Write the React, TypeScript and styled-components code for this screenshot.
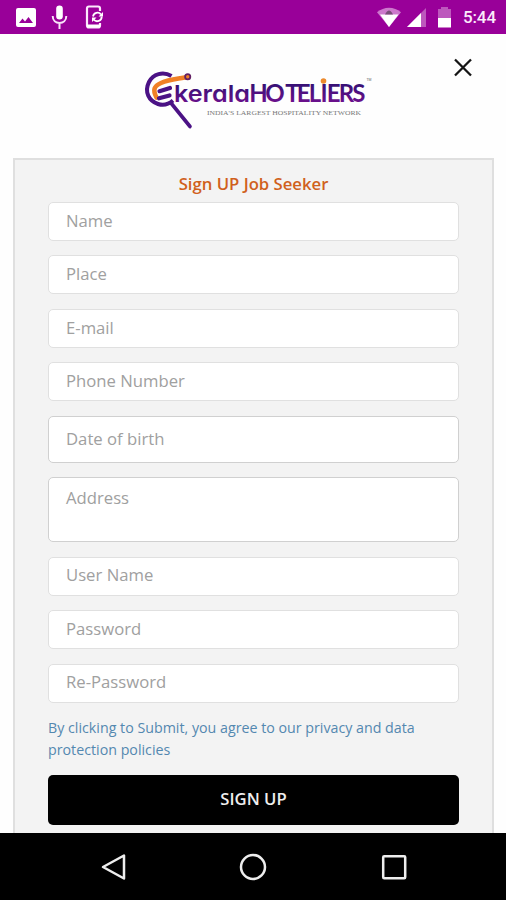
import React from "react";
import styled, { createGlobalStyle } from "styled-components";

const GlobalStyle = createGlobalStyle`
  * { box-sizing: border-box; }
  body { margin: 0; background: #fff; font-family: "Open Sans", sans-serif; }
`;

const Screen = styled.div`
  width: 506px;
  height: 900px;
  display: flex;
  flex-direction: column;
  overflow: hidden;
  background: #fefefe;
`;

const StatusBar = styled.header`
  flex: none;
  height: 34px;
  padding: 0 10px 0 16px;
  display: flex;
  align-items: center;
  justify-content: space-between;
  background: #990099;
`;

const StatusGroup = styled.div<{ $gap: number }>`
  display: flex;
  align-items: center;
  gap: ${(p) => p.$gap}px;
`;

const Clock = styled.span`
  color: #fbeafb;
  font: 500 17px/34px Roboto, sans-serif;
  letter-spacing: -0.1px;
`;

const Brand = styled.div`
  flex: none;
  height: 124px;
  padding: 24px 33px 0 136px;
  display: flex;
  align-items: flex-start;
  justify-content: space-between;
`;

const LogoSvg = styled.svg`
  display: block;
  margin-top: 2px;
`;

const LogoLower = styled.text`
  font: 600 23px Inter, sans-serif;
  font-feature-settings: "cv11";
`;

const LogoUpper = styled.text`
  font: 700 24px Lato, sans-serif;
`;

const CloseButton = styled.button`
  width: 20px;
  height: 20px;
  padding: 0;
  border: 0;
  background: none;
`;

const Card = styled.form`
  flex: none;
  height: 675px;
  margin: 0 12px 0 13px;
  padding: 11px 33px 0;
  border: 2px solid #dfdfdf;
  border-bottom: 0;
  background: #f3f3f3;
`;

const Title = styled.h1`
  margin: 0 0 6px;
  color: #d0601c;
  font-size: 16.7px;
  line-height: 25px;
  font-weight: 600;
  text-align: center;
`;

const Fields = styled.div`
  display: flex;
  flex-direction: column;
  gap: 14.45px;
`;

const fieldLook = (border: string, height: number) => `
  display: block;
  width: 411px;
  height: ${height}px;
  border: 1.5px solid ${border};
  border-radius: 5px;
  background: #fff;
  color: #555;
  font: 400 16.7px/22px "Open Sans", sans-serif;
  outline: none;
  resize: none;
  &::placeholder { color: #a0a0a0; opacity: 1; }
`;

const Input = styled.input<{ $tall?: boolean }>`
  ${(p) => fieldLook(p.$tall ? "#d0d0d0" : "#e0e0e0", p.$tall ? 47 : 39)}
  padding: 0 17px ${(p) => (p.$tall ? 1 : 2.5)}px;
`;

const TextArea = styled.textarea`
  ${fieldLook("#d0d0d0", 65)}
  padding: 9px 17px 8px;
`;

const Terms = styled.a`
  display: block;
  margin-top: 14.2px;
  color: #5388b0;
  font-size: 14.24px;
  line-height: 22px;
  text-decoration: none;
`;

const Submit = styled.button`
  display: block;
  width: 411px;
  height: 50px;
  margin-top: 14px;
  padding: 0 0 3px;
  border: 0;
  border-radius: 5px;
  background: #000;
  color: #eee;
  font: 600 16.7px "Open Sans", sans-serif;
`;

const NavBar = styled.nav`
  flex: none;
  height: 67px;
  padding: 0 98px 0 100px;
  display: flex;
  align-items: center;
  justify-content: space-between;
  background: #000;
`;

function Logo() {
  return (
    <LogoSvg width="240" height="75" viewBox="136 60 240 75" aria-label="ekeralaHoteliers">
      <defs>
        <linearGradient id="ink" x1="0" y1="0" x2="0" y2="1">
          <stop offset="0" stopColor="#24106d" />
          <stop offset="1" stopColor="#7a1093" />
        </linearGradient>
      </defs>
      <path d="M171.5 76 C163 71 153 74 149 82 C144 92 149 101 158 104 C164 106 169 104 173 100.5" fill="none" stroke="#4b1285" strokeWidth="4" />
      <path d="M171 103 L190 126.5" stroke="#4b1285" strokeWidth="3.6" strokeLinecap="round" />
      <path d="M187 77 C178 79 170 79 161 83 C154 86 152.5 90 156.5 97.5" fill="none" stroke="#f08026" strokeWidth="4.6" strokeLinecap="round" />
      <path d="M159.5 91.2 L170 88 M159 98.3 L169.5 95.4" stroke="#4b1285" strokeWidth="4.2" strokeLinecap="round" />
      <circle cx="187.7" cy="76.7" r="2.6" fill="#f08026" stroke="#632064" strokeWidth="1.8" />
      <LogoLower x="174" y="102" fill="url(#ink)" textLength="76" lengthAdjust="spacingAndGlyphs">kerala</LogoLower>
      <LogoUpper x="249.2 265.2 285.2 296.8 308.8 320.5 326.8 338.8 352.3" y="102" fill="url(#ink)">HOTELIERS</LogoUpper>
      <circle cx="323.5" cy="81" r="2.8" fill="#ec8a2d" />
      <text x="207" y="115" fill="#777" fontFamily="Liberation Serif, serif" fontSize="7" textLength="154" lengthAdjust="spacingAndGlyphs">INDIA'S LARGEST HOSPITALITY NETWORK</text>
      <text x="366.5" y="81" fill="#666" fontFamily="Liberation Sans, sans-serif" fontSize="3.5" textLength="5">TM</text>
    </LogoSvg>
  );
}

export default function App() {
  return (
    <>
      <GlobalStyle />
      <Screen>
        <StatusBar>
          <StatusGroup $gap={0}>
            <svg width="92" height="34" viewBox="16 0 92 34">
              <path fillRule="evenodd" fill="#fff" d="M18 8h16a2 2 0 0 1 2 2v15a2 2 0 0 1-2 2H18a2 2 0 0 1-2-2V10a2 2 0 0 1 2-2Zm1 15h14l-4.5-6-3.5 4.5-2.5-3Z" />
              <rect x="56.2" y="5.5" width="6.6" height="14" rx="3.3" fill="#fff" />
              <path d="M52.7 16c0 9.2 13.6 9.2 13.6 0M59.5 23v6" fill="none" stroke="#f8e4f8" strokeWidth="2" />
              <path d="M100 11V8.5a2 2 0 0 0-2-2H89a2 2 0 0 0-2 2v17a2 2 0 0 0 2 2h9a2 2 0 0 0 2-2V23" fill="none" stroke="#fce8fc" strokeWidth="2.2" />
              <path d="M87 24.5h13v3H87z" fill="#fff" />
              <path d="M93 16.5a4.5 4.5 0 0 1 8-2M101.7 16.5a4.5 4.5 0 0 1-8 3" fill="none" stroke="#fff" strokeWidth="1.8" />
              <path d="M103 12v4.5h-4.5ZM92 22v-4.5h4.5Z" fill="#fff" />
            </svg>
          </StatusGroup>
          <StatusGroup $gap={9}>
            <svg width="78" height="34" viewBox="377 0 78 34">
              <path d="M378 12.3C385 6.2 395 6.2 402 12.3L390 27Z" fill="#cc79cc" />
              <path d="M381 14.5h18.5L390 27Z" fill="#fff" />
              <path d="M386 14.5q4-8 8 0Z" fill="#795079" />
              <path d="M427 8v19h-19Z" fill="#bd58bd" />
              <path d="M422 13v14h-14Z" fill="#fff" />
              <path d="M439 9h3V7h7v2h3v9h-13Z" fill="#bd58bd" />
              <path d="M439 18h13v9.5h-13Z" fill="#fff" />
            </svg>
            <Clock>5:44</Clock>
          </StatusGroup>
        </StatusBar>
        <Brand>
          <Logo />
          <CloseButton aria-label="Close" type="button">
            <svg width="20" height="20" viewBox="0 0 20 20">
              <path d="M2 1.5 18 17.5M18 1.5 2 17.5" stroke="#151515" strokeWidth="2.3" />
            </svg>
          </CloseButton>
        </Brand>
        <Card>
          <Title>Sign UP Job Seeker</Title>
          <Fields>
            <Input placeholder="Name" />
            <Input placeholder="Place" />
            <Input placeholder="E-mail" />
            <Input placeholder="Phone Number" />
            <Input placeholder="Date of birth" $tall />
            <TextArea placeholder="Address" />
            <Input placeholder="User Name" />
            <Input placeholder="Password" />
            <Input placeholder="Re-Password" />
          </Fields>
          <Terms>By clicking to Submit, you agree to our privacy and data protection policies</Terms>
          <Submit type="button">SIGN UP</Submit>
        </Card>
        <NavBar>
          <svg width="26" height="28" viewBox="0 0 26 28">
            <path d="M3 14 24 2.5v23Z" fill="none" stroke="#eee" strokeWidth="2.5" strokeLinejoin="round" />
          </svg>
          <svg width="28" height="28" viewBox="0 0 28 28">
            <circle cx="14" cy="14" r="12" fill="none" stroke="#eee" strokeWidth="2.5" />
          </svg>
          <svg width="28" height="28" viewBox="0 0 28 28">
            <rect x="3.2" y="3.2" width="22" height="22" rx="1" fill="none" stroke="#eee" strokeWidth="2.5" />
          </svg>
        </NavBar>
      </Screen>
    </>
  );
}
